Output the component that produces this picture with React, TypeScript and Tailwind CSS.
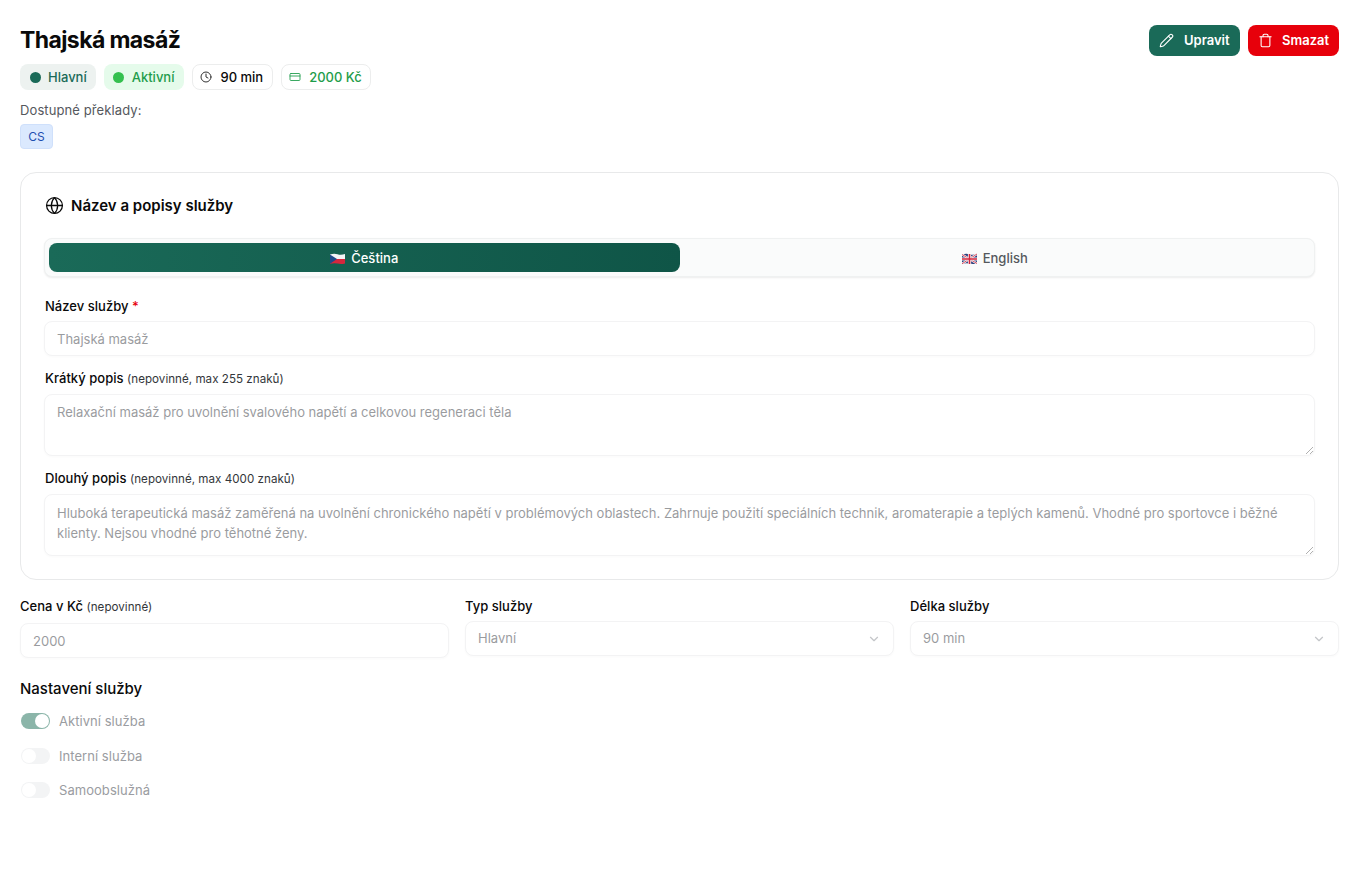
import React from "react";
import { Pencil, Trash, Clock, CreditCard, Globe, ChevronDown } from "lucide-react";

const CzFlag = () => (
  <svg width="15" height="12" viewBox="0 0 15 12" className="shrink-0">
    <path d="M0 1.5 Q4 0 7.5 1.2 T15 1 V6 H0Z" fill="#f3f4f6" />
    <path d="M0 6 H15 V10.5 Q11 11.6 7.5 10.6 T0 10.8Z" fill="#d7263d" />
    <path d="M0 1.5 L7 6 L0 10.8Z" fill="#1f4a8a" />
  </svg>
);
const UkFlag = () => (
  <svg width="15" height="12" viewBox="0 0 15 12" className="shrink-0">
    <path d="M0 1.5 Q4 0 7.5 1.2 T15 1 V10.5 Q11 11.6 7.5 10.6 T0 10.8Z" fill="#2b3f7e" />
    <path d="M0 1.5 L15 10.5 M15 1 L0 10.8" stroke="#f3f4f6" strokeWidth="2.2" />
    <path d="M0 1.5 L15 10.5 M15 1 L0 10.8" stroke="#d7263d" strokeWidth="0.8" />
    <path d="M7.5 1 V11 M0 6 H15" stroke="#f3f4f6" strokeWidth="3.2" />
    <path d="M7.5 1 V11 M0 6 H15" stroke="#d7263d" strokeWidth="1.6" />
  </svg>
);

const Toggle = ({ on, label }: { on?: boolean; label: string }) => (
  <div className="flex items-center gap-[9px] h-[20px]">
    {on ? (
      <div className="w-[29px] h-[16px] rounded-full bg-[#8bb5a9] flex items-center justify-end pr-[1px] ml-[1px]">
        <div className="w-[14px] h-[14px] rounded-full bg-white" />
      </div>
    ) : (
      <div className="w-[29px] h-[16px] rounded-full bg-[#f3f4f5] flex items-center pl-[1px] ml-[1px]">
        <div className="w-[14px] h-[14px] rounded-full bg-white" />
      </div>
    )}
    <span className="text-[13px] leading-[20px] text-[#9a9ca1] tracking-[0.05px]">{label}</span>
  </div>
);

const fieldBox =
  "w-full rounded-lg border border-[#e8e9eb] bg-white px-3 text-[13px] text-[#36393f] shadow-[0_1px_2px_rgba(0,0,0,0.03)] outline-none opacity-50";

const labelBase = "block text-[13px] font-medium leading-[20px] tracking-[0.03px]";

const Select = ({ value }: { value: string }) => (
  <div className={`${fieldBox} h-[35px] flex items-center justify-between`}>
    <span>{value}</span>
    <ChevronDown size={14} className="text-[#898d93]" />
  </div>
);

export default function App() {
  return (
    <div
      className="min-h-[881px] bg-white pl-5 pr-[33px] pt-6 text-[#0a0a0a]"
      style={{ fontFamily: "Inter, 'Liberation Sans', sans-serif" }}
    >
      <div className="flex items-start justify-between">
        <div>
          <h1 className="text-[23px] font-bold leading-[32px] tracking-[-0.6px]">Thajská masáž</h1>
          <div className="mt-2 flex gap-2 text-[13px] font-medium leading-[20px]">
            <div className="flex h-[26px] items-center gap-[7px] rounded-lg bg-[#edf2f0] pl-[10px] pr-[9px] text-[#1a6a58]">
              <span className="h-[11px] w-[11px] rounded-full bg-[#1a6a58]" />
              Hlavní
            </div>
            <div className="flex h-[26px] items-center gap-[8px] rounded-lg bg-[#e5fbeb] pl-[9px] pr-[10px] text-[#1f9d4b]">
              <span className="h-[11px] w-[11px] rounded-full bg-[#34c04f]" />
              Aktivní
            </div>
            <div className="flex h-[26px] items-center gap-2 rounded-lg border border-[#eceded] bg-white pl-[7px] pr-[9px] text-[#0a0a0a]">
              <Clock size={12} strokeWidth={2} className="text-[#333]" />
              90 min
            </div>
            <div className="flex h-[26px] items-center gap-2 rounded-lg border border-[#eceded] bg-white pl-[7px] pr-[8px] text-[#1f9d4b]">
              <CreditCard size={12} strokeWidth={1.75} />
              2000 Kč
            </div>
          </div>
          <p className="mt-[11px] text-[13px] leading-[18px] tracking-[0.1px] text-[#55585d]">Dostupné překlady:</p>
          <div className="mt-[5px] flex h-[25px] w-[33px] items-center justify-center rounded border border-[#cfe0fb] bg-[#dbe9fe] text-xs text-[#1e4fb0]">
            CS
          </div>
        </div>
        <div className="mt-px flex gap-2">
          <button className="flex h-[31px] w-[91px] items-center gap-[10px] rounded-lg bg-[#1a6a58] pl-[10px] text-[13px] font-semibold text-white">
            <Pencil size={15} strokeWidth={1.75} />
            Upravit
          </button>
          <button className="flex h-[31px] w-[91px] items-center gap-[9px] rounded-lg bg-[#e7000b] pl-[10px] text-[13px] font-semibold text-white">
            <Trash size={15} strokeWidth={1.75} />
            Smazat
          </button>
        </div>
      </div>

      <section className="mt-[23px] h-[408px] rounded-2xl border border-[#e8e9ea] bg-white px-[23px] pt-[22px]">
        <div className="flex h-[20px] items-center gap-[7px] pl-px">
          <Globe size={19} strokeWidth={1.6} className="text-[#0a0a0a]" />
          <h2 className="mt-[2px] text-[15px] font-semibold">Název a popisy služby</h2>
        </div>
        <div className="mt-[23px] flex h-[39px] rounded-lg border border-[#eff1f1] bg-[#fafbfb] p-1 shadow-[0_1px_2px_rgba(0,0,0,0.08)]">
          <div className="flex flex-1 items-center justify-center gap-[6px] rounded-lg bg-gradient-to-r from-[#1a6a58] to-[#0f5547] pt-[2px] text-[13px] font-medium text-white">
            <CzFlag />
            Čeština
          </div>
          <div className="flex flex-1 items-center justify-center gap-[6px] rounded-lg pt-[2px] text-[13px] font-medium text-[#55585d]">
            <UkFlag />
            English
          </div>
        </div>

        <label className={`${labelBase} mt-[19px] pl-px`}>
          Název služby <span className="text-[#e7000b]">*</span>
        </label>
        <input disabled readOnly value="Thajská masáž" className={`${fieldBox} mt-[5px] block h-[35px]`} />

        <label className={`${labelBase} mt-[12px] pl-px`}>
          Krátký popis <span className="text-[11.6px] font-normal text-[#33363a]">(nepovinné, max 255 znaků)</span>
        </label>
        <textarea
          disabled
          readOnly
          value="Relaxační masáž pro uvolnění svalového napětí a celkovou regeneraci těla"
          className={`${fieldBox} mt-[5px] block h-[62px] py-[7px] leading-[20px]`}
        />

        <label className={`${labelBase} mt-[12px] pl-px`}>
          Dlouhý popis <span className="text-[11.6px] font-normal text-[#33363a]">(nepovinné, max 4000 znaků)</span>
        </label>
        <textarea
          disabled
          readOnly
          value="Hluboká terapeutická masáž zaměřená na uvolnění chronického napětí v problémových oblastech. Zahrnuje použití speciálních technik, aromaterapie a teplých kamenů. Vhodné pro sportovce i běžné klienty. Nejsou vhodné pro těhotné ženy."
          className={`${fieldBox} mt-[5px] block h-[62px] py-[8px] leading-[20px]`}
        />
      </section>

      <div className="mt-4 grid grid-cols-3 gap-4">
        <div>
          <label className={labelBase}>
            Cena v Kč <span className="text-[11.6px] font-normal text-[#33363a]">(nepovinné)</span>
          </label>
          <input disabled readOnly value="2000" className={`${fieldBox} mt-[6px] block h-[35px]`} />
        </div>
        <div>
          <label className={labelBase}>Typ služby</label>
          <div className="mt-[5px]">
            <Select value="Hlavní" />
          </div>
        </div>
        <div>
          <label className={labelBase}>Délka služby</label>
          <div className="mt-[5px]">
            <Select value="90 min" />
          </div>
        </div>
      </div>

      <h3 className="mt-[20px] text-[15px] font-medium leading-[22px]">Nastavení služby</h3>
      <div className="mt-[11px] flex flex-col gap-[14.5px]">
        <Toggle on label="Aktivní služba" />
        <Toggle label="Interní služba" />
        <Toggle label="Samoobslužná" />
      </div>
    </div>
  );
}
